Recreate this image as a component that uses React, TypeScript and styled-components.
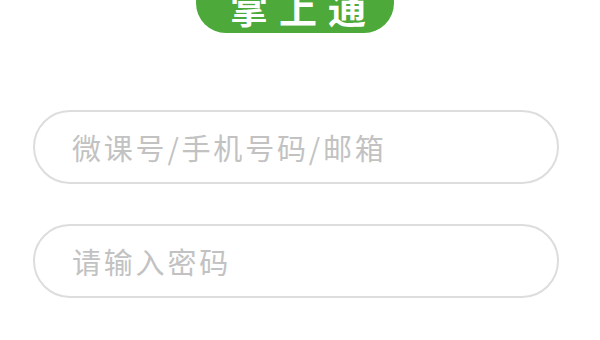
import React from "react";
import styled, { createGlobalStyle } from "styled-components";

const Global = createGlobalStyle`
  html, body { margin: 0; padding: 0; background: #ffffff; }
  body { font-family: "Noto Sans CJK SC", "Noto Sans", sans-serif; }
`;

const Page = styled.div`
  width: 600px;
  height: 340px;
  overflow: hidden;
  background: #ffffff;
  display: flex;
  flex-direction: column;
  align-items: center;
`;

const Logo = styled.div`
  width: 198px;
  height: 60px;
  margin-top: -27px;
  margin-left: -11px;
  border-radius: 30px;
  background: #4ca93a;
  color: #ffffff;
  display: flex;
  align-items: center;
  justify-content: center;
  font-size: 38px;
  font-weight: 700;
  letter-spacing: 11px;
  padding-left: 18px;
  padding-top: 7px;
  box-sizing: border-box;
  line-height: 1;
`;

const Form = styled.div`
  align-self: stretch;
  display: flex;
  flex-direction: column;
  gap: 40px;
  padding: 0 41px 0 33px;
  margin-top: 77px;
`;

const Field = styled.div`
  height: 74px;
  box-sizing: border-box;
  border: 2px solid #dddddd;
  border-radius: 37px;
  display: flex;
  align-items: center;
  padding-left: 37px;
`;

const Placeholder = styled.span`
  color: #c2c2c2;
  font-size: 29px;
  letter-spacing: 2.8px;
  line-height: 1;
`;

export default function App() {
  return (
    <>
      <Global />
      <Page>
        <Logo>掌上通</Logo>
        <Form>
          <Field>
            <Placeholder>微课号/手机号码/邮箱</Placeholder>
          </Field>
          <Field>
            <Placeholder>请输入密码</Placeholder>
          </Field>
        </Form>
      </Page>
    </>
  );
}
